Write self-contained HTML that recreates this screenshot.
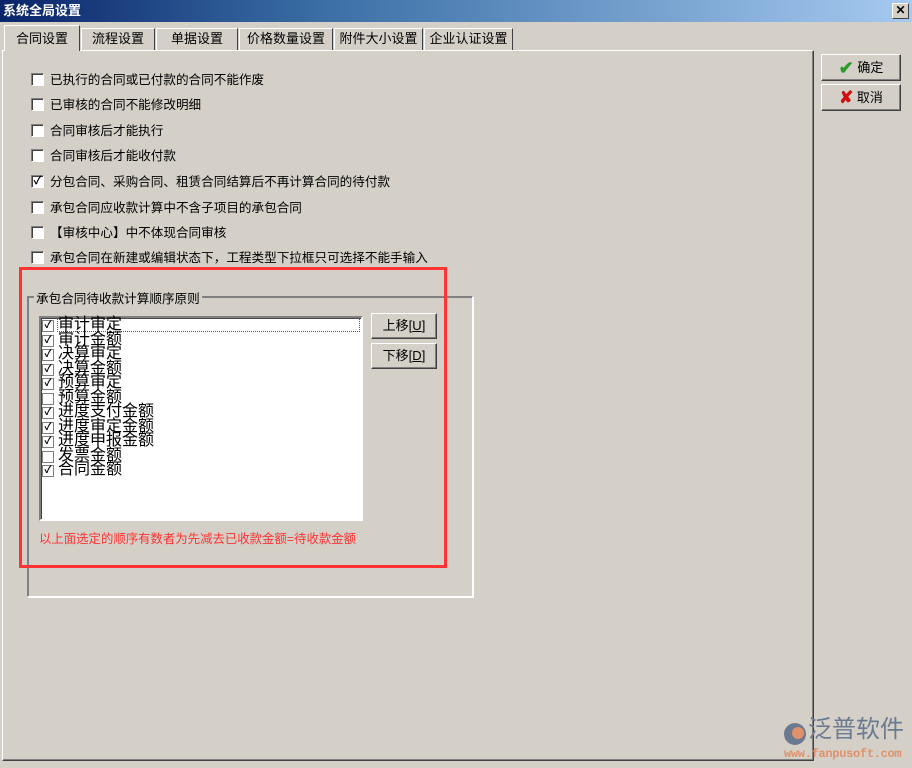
<!DOCTYPE html>
<html><head><meta charset="utf-8"><style>
*{margin:0;padding:0;box-sizing:border-box}
body{width:912px;height:768px;background:#d4d0c8;font-family:"Liberation Sans","Noto Sans CJK SC","WenQuanYi Zen Hei",sans-serif;font-size:12px;color:#000;position:relative;overflow:hidden}
.a{position:absolute}
.title{left:0;top:0;width:912px;height:22px;background:linear-gradient(90deg,#0a246a 0%,#3a6ea5 35%,#a6caf0 100%);color:#fff;font-weight:bold;font-size:13px;line-height:22px;padding-left:3px}
.x{left:892px;top:3px;width:17px;height:16px;background:#d4d0c8;border:1px solid;border-color:#fff #404040 #404040 #fff;font-size:12px;line-height:13px;text-align:center;font-weight:bold;color:#000}
.tab{top:28px;height:22px;border:1px solid;border-color:#fff #404040 transparent #fff;border-bottom:none;text-align:center;line-height:20px;font-size:13px}
.panel{left:2px;top:50px;width:812px;height:711px;border:1px solid;border-color:#fff #404040 #404040 #fff;box-shadow:inset -1px -1px #808080}
.cb{width:13px;height:13px;background:#fff;border:1px solid;border-color:#808080 #fff #fff #808080;box-shadow:inset 1px 1px #404040;font-size:11px;line-height:10px;text-align:center;font-weight:bold}
.row{left:31px;height:16px;font-size:12.6px;line-height:16px}
.row .cb{position:absolute;left:0;top:1px}
.row span{position:absolute;left:19px;white-space:nowrap}
.btn{background:#d4d0c8;border:1px solid;border-color:#fff #404040 #404040 #fff;box-shadow:inset -1px -1px #808080;text-align:center;font-size:13px}
.li{left:42px;height:15px;font-size:16px;line-height:15px;white-space:nowrap}
.li .cb{position:absolute;left:0;top:2px;width:12px;height:12px;border:1px solid #808080;box-shadow:none;font-size:10px;line-height:10px}
.li span{position:absolute;left:16px;top:-1px}
</style></head><body>
<div class="a title">系统全局设置</div>
<div class="a x">✕</div>
<div class="a panel"></div>
<div class="a tab" style="left:4px;top:25px;height:26px;width:76px;background:#d4d0c8;z-index:2;line-height:26px">合同设置</div>
<div class="a tab" style="left:81px;width:74px">流程设置</div>
<div class="a tab" style="left:156px;width:82px">单据设置</div>
<div class="a tab" style="left:239px;width:94px">价格数量设置</div>
<div class="a tab" style="left:334px;width:89px">附件大小设置</div>
<div class="a tab" style="left:424px;width:89px">企业认证设置</div>

<div class="a row" style="top:72px"><div class="cb"></div><span>已执行的合同或已付款的合同不能作废</span></div>
<div class="a row" style="top:97px"><div class="cb"></div><span>已审核的合同不能修改明细</span></div>
<div class="a row" style="top:123px"><div class="cb"></div><span>合同审核后才能执行</span></div>
<div class="a row" style="top:148px"><div class="cb"></div><span>合同审核后才能收付款</span></div>
<div class="a row" style="top:174px"><div class="cb">✓</div><span>分包合同、采购合同、租赁合同结算后不再计算合同的待付款</span></div>
<div class="a row" style="top:200px"><div class="cb"></div><span>承包合同应收款计算中不含子项目的承包合同</span></div>
<div class="a row" style="top:225px"><div class="cb"></div><span>【审核中心】中不体现合同审核</span></div>
<div class="a row" style="top:250px"><div class="cb"></div><span>承包合同在新建或编辑状态下，工程类型下拉框只可选择不能手输入</span></div>

<div class="a" style="left:27px;top:296px;width:446px;height:301px;border:1px solid;border-color:#808080 #fff #fff #808080;box-shadow:1px 1px #808080 inset,1px 1px #fff"></div>
<div class="a" style="left:34px;top:288px;background:#d4d0c8;padding:0 2px;font-size:12.6px">承包合同待收款计算顺序原则</div>
<div class="a" style="left:39px;top:316px;width:324px;height:205px;background:#fff;border:2px solid;border-color:#808080 #fff #fff #808080;box-shadow:inset 1px 1px #404040"></div>
<div class="a" style="left:57px;top:318px;width:303px;height:14px;border:1px dotted #555"></div>
<div class="a li" style="top:318px"><div class="cb">✓</div><span>审计审定</span></div>
<div class="a li" style="top:332.5px"><div class="cb">✓</div><span>审计金额</span></div>
<div class="a li" style="top:347px"><div class="cb">✓</div><span>决算审定</span></div>
<div class="a li" style="top:361.5px"><div class="cb">✓</div><span>决算金额</span></div>
<div class="a li" style="top:376px"><div class="cb">✓</div><span>预算审定</span></div>
<div class="a li" style="top:390.5px"><div class="cb"></div><span>预算金额</span></div>
<div class="a li" style="top:405px"><div class="cb">✓</div><span>进度支付金额</span></div>
<div class="a li" style="top:419.5px"><div class="cb">✓</div><span>进度审定金额</span></div>
<div class="a li" style="top:434px"><div class="cb">✓</div><span>进度申报金额</span></div>
<div class="a li" style="top:448.5px"><div class="cb"></div><span>发票金额</span></div>
<div class="a li" style="top:463px"><div class="cb">✓</div><span>合同金额</span></div>
<div class="a btn" style="left:371px;top:313px;width:66px;height:26px;line-height:24px">上移[<u>U</u>]</div>
<div class="a btn" style="left:371px;top:343px;width:66px;height:26px;line-height:24px">下移[<u>D</u>]</div>
<div class="a" style="left:39px;top:529px;color:#f33;font-size:12.4px">以上面选定的顺序有数者为先减去已收款金额=待收款金额</div>
<div class="a" style="left:19px;top:267px;width:428px;height:301px;border:3px solid #f33"></div>

<div class="a btn" style="left:821px;top:54px;width:80px;height:27px;line-height:25px"><span style="color:#2a9a2a;font-size:18px;font-weight:bold;vertical-align:-2px">✔</span> 确定</div>
<div class="a btn" style="left:821px;top:84px;width:80px;height:27px;line-height:25px"><span style="color:#d01010;font-size:17px;font-weight:bold;vertical-align:-1px">✘</span> 取消</div>

<div class="a" style="left:784px;top:723px;width:22px;height:22px;border-radius:50%;background:#6b7a90"></div>
<div class="a" style="left:792px;top:727px;width:12px;height:12px;border-radius:50%;background:#e0906a"></div>
<div class="a" style="left:808px;top:716px;font-size:24px;color:#6b7a90;line-height:28px">泛普软件</div>
<div class="a" style="left:784px;top:747px;font-size:12px;color:#e0906a;font-family:'Liberation Mono',monospace;font-weight:bold;letter-spacing:-0.3px">www.fanpusoft.com</div>
</body></html>
